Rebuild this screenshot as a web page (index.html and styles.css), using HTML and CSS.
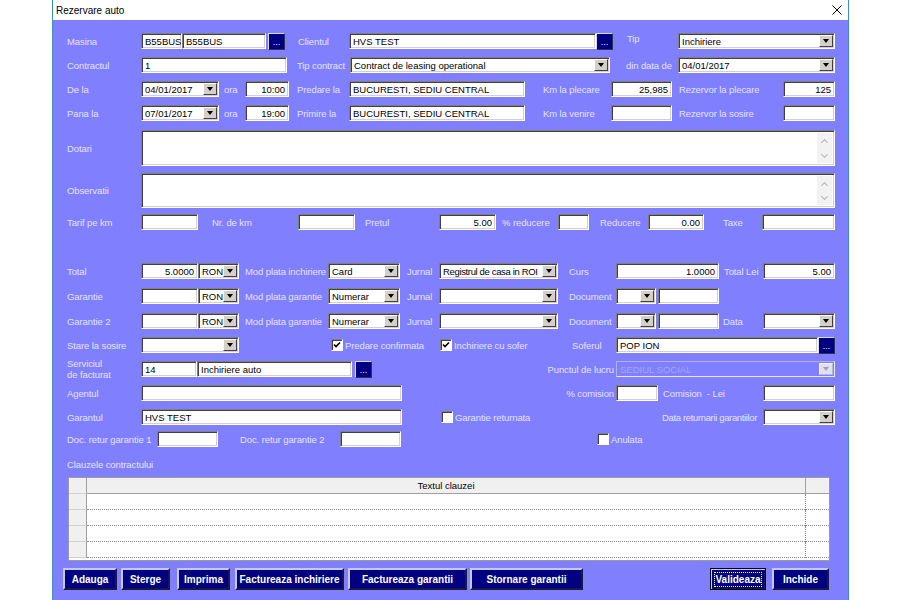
FILE: index.html
```html
<!DOCTYPE html>
<html lang="ro">
<head>
  <meta charset="UTF-8">
  <title>Rezervare auto</title>
  <link rel="stylesheet" href="styles.css">
</head>
<body>

  <div class="window">

    <!-- Title bar -->
    <div class="titlebar">
      <span>Rezervare auto</span>
      <svg class="close" width="10" height="10" viewBox="0 0 10 10">
        <path d="M0.5 0.5 L9.5 9.5 M9.5 0.5 L0.5 9.5" stroke="#000" stroke-width="1" fill="none"/>
      </svg>
    </div>

    <div class="form">

      <!-- Masina / Clientul / Tip -->
      <div class="row">
        <span class="lbl w74">Masina</span>
        <div class="box w41">B55BUS</div>
        <div class="box w84">B55BUS</div>
        <div class="dots ml2">...</div>
        <span class="lbl ml13 w51">Clientul</span>
        <div class="box w247">HVS TEST</div>
        <div class="dots">...</div>
        <span class="lbl ml14 w51 up4">Tip</span>
        <div class="box combo w157"><span>Inchiriere</span><i class="drop"></i></div>
      </div>

      <!-- Contractul -->
      <div class="row">
        <span class="lbl w74">Contractul</span>
        <div class="box w146">1</div>
        <span class="lbl ml10 w53">Tip contract</span>
        <div class="box combo w260"><span>Contract de leasing operational</span><i class="drop"></i></div>
        <span class="lbl ml16 w52">din data de</span>
        <div class="box combo w157"><span>04/01/2017</span><i class="drop"></i></div>
      </div>

      <!-- De la -->
      <div class="row">
        <span class="lbl w74">De la</span>
        <div class="box combo w78"><span>04/01/2017</span><i class="drop"></i></div>
        <span class="lbl ml5 w21">ora</span>
        <div class="box num w44">10:00</div>
        <span class="lbl ml8 w52">Predare la</span>
        <div class="box w176">BUCURESTI, SEDIU CENTRAL</div>
        <span class="lbl ml18 w68">Km la plecare</span>
        <div class="box num w61">25,985</div>
        <span class="lbl ml7 w104">Rezervor la plecare</span>
        <div class="box num w52">125</div>
      </div>

      <!-- Pana la -->
      <div class="row">
        <span class="lbl w74">Pana la</span>
        <div class="box combo w78"><span>07/01/2017</span><i class="drop"></i></div>
        <span class="lbl ml5 w21">ora</span>
        <div class="box num w44">19:00</div>
        <span class="lbl ml8 w52">Primire la</span>
        <div class="box w176">BUCURESTI, SEDIU CENTRAL</div>
        <span class="lbl ml18 w68">Km la venire</span>
        <div class="box num w61"></div>
        <span class="lbl ml7 w104">Rezervor la sosire</span>
        <div class="box num w52"></div>
      </div>

      <!-- Dotari / Observatii -->
      <div class="memo-row mt5">
        <span class="lbl w74">Dotari</span>
        <div class="box memo h36"><div class="scroll"><i class="up"></i><i class="down"></i></div></div>
      </div>
      <div class="memo-row mt7">
        <span class="lbl w74">Observatii</span>
        <div class="box memo h35"><div class="scroll"><i class="up"></i><i class="down"></i></div></div>
      </div>

      <!-- Tarif -->
      <div class="row mt2">
        <span class="lbl w74">Tarif pe km</span>
        <div class="box w57"></div>
        <span class="lbl ml14 w86">Nr. de km</span>
        <div class="box w57"></div>
        <span class="lbl ml10 w74">Pretul</span>
        <div class="box num w57">5.00</div>
        <span class="lbl ml6 w56">% reducere</span>
        <div class="box w31"></div>
        <span class="lbl ml11 w48">Reducere</span>
        <div class="box num w56">0.00</div>
        <span class="lbl ml19 w39">Taxe</span>
        <div class="box w73"></div>
      </div>

      <!-- Total -->
      <div class="row mt25">
        <span class="lbl w74">Total</span>
        <div class="box num w57">5.0000</div>
        <div class="box combo w41"><span>RON</span><i class="drop"></i></div>
        <span class="lbl ml6 w83">Mod plata inchiriere</span>
        <div class="box combo w72"><span>Card</span><i class="drop"></i></div>
        <span class="lbl ml7 w32">Jurnal</span>
        <div class="box combo tight w119"><span>Registrul de casa in ROI</span><i class="drop"></i></div>
        <span class="lbl ml11 w47">Curs</span>
        <div class="box num w103">1.0000</div>
        <span class="lbl ml5 w39">Total Lei</span>
        <div class="box num w72">5.00</div>
      </div>

      <!-- Garantie -->
      <div class="row mt1">
        <span class="lbl w74">Garantie</span>
        <div class="box w57"></div>
        <div class="box combo w41"><span>RON</span><i class="drop"></i></div>
        <span class="lbl ml6 w83">Mod plata garantie</span>
        <div class="box combo w72"><span>Numerar</span><i class="drop"></i></div>
        <span class="lbl ml7 w32">Jurnal</span>
        <div class="box combo w119"><span></span><i class="drop"></i></div>
        <span class="lbl ml11 w47">Document</span>
        <div class="box combo w40"><span></span><i class="drop"></i></div>
        <div class="box ml2 w61"></div>
      </div>

      <!-- Garantie 2 -->
      <div class="row mt1">
        <span class="lbl w74">Garantie 2</span>
        <div class="box w57"></div>
        <div class="box combo w41"><span>RON</span><i class="drop"></i></div>
        <span class="lbl ml6 w83">Mod plata garantie</span>
        <div class="box combo w72"><span>Numerar</span><i class="drop"></i></div>
        <span class="lbl ml7 w32">Jurnal</span>
        <div class="box combo w119"><span></span><i class="drop"></i></div>
        <span class="lbl ml11 w47">Document</span>
        <div class="box combo w40"><span></span><i class="drop"></i></div>
        <div class="box ml2 w61"></div>
        <span class="lbl ml4 w40">Data</span>
        <div class="box combo w72"><span></span><i class="drop"></i></div>
      </div>

      <!-- Stare la sosire -->
      <div class="row">
        <span class="lbl w74">Stare la sosire</span>
        <div class="box combo w98"><span></span><i class="drop"></i></div>
        <span class="check ml92 w109"><i class="tick"><svg width="8" height="8" viewBox="0 0 8 8"><path d="M1 3.5 L3 5.5 L7 1.5" stroke="#000" stroke-width="1.6" fill="none"/></svg></i>Predare confirmata</span>
        <span class="check w132"><i class="tick"><svg width="8" height="8" viewBox="0 0 8 8"><path d="M1 3.5 L3 5.5 L7 1.5" stroke="#000" stroke-width="1.6" fill="none"/></svg></i>Inchiriere cu sofer</span>
        <span class="lbl w44">Soferul</span>
        <div class="box w202">POP ION</div>
        <div class="dots">...</div>
      </div>

      <!-- Serviciul de facturat -->
      <div class="row">
        <span class="lbl two w74">Serviciul<br>de facturat</span>
        <div class="box w56">14</div>
        <div class="box w155">Inchiriere auto</div>
        <div class="dots ml3">...</div>
        <span class="lbl right w244">Punctul de lucru</span>
        <div class="box combo disabled w219"><span>SEDIUL SOCIAL</span><i class="drop"></i></div>
      </div>

      <!-- Agentul -->
      <div class="row">
        <span class="lbl w74">Agentul</span>
        <div class="box w261"></div>
        <span class="lbl right w214">% comision</span>
        <div class="box w42"></div>
        <span class="lbl ml5 w100">Comision &nbsp;- Lei</span>
        <div class="box w72"></div>
      </div>

      <!-- Garantul -->
      <div class="row">
        <span class="lbl w74">Garantul</span>
        <div class="box w261">HVS TEST</div>
        <span class="check ml39 w221"><i class="tick"></i>Garantie returnata</span>
        <span class="lbl tight w101">Data returnarii garantiilor</span>
        <div class="box combo w72"><span></span><i class="drop"></i></div>
      </div>

      <!-- Documente retur -->
      <div class="row h20">
        <span class="lbl w90">Doc. retur garantie 1</span>
        <div class="box w61"></div>
        <span class="lbl ml22 w100">Doc. retur garantie 2</span>
        <div class="box w61"></div>
        <span class="check ml196"><i class="tick"></i>Anulata</span>
      </div>

      <!-- Clauze -->
      <div class="lbl caption">Clauzele contractului</div>
      <div class="grid">
        <div class="grid-row head">
          <span class="rh"></span><span class="cell">Textul clauzei</span><span class="end"></span>
        </div>
        <div class="grid-row"><span class="rh"></span><span class="cell"></span><span class="end"></span></div>
        <div class="grid-row"><span class="rh"></span><span class="cell"></span><span class="end"></span></div>
        <div class="grid-row"><span class="rh"></span><span class="cell"></span><span class="end"></span></div>
        <div class="grid-row"><span class="rh"></span><span class="cell"></span><span class="end"></span></div>
      </div>

      <!-- Actiuni -->
      <div class="buttons">
        <button class="btn w54">Adauga</button>
        <button class="btn ml4 w49">Sterge</button>
        <button class="btn ml7 w53">Imprima</button>
        <button class="btn ml5 w109">Factureaza inchiriere</button>
        <button class="btn ml4 w119">Factureaza garantii</button>
        <button class="btn ml3 w113">Stornare garantii</button>
        <button class="btn focus ml127 w56"><span>Valideaza</span></button>
        <button class="btn ml6 w57">Inchide</button>
      </div>

    </div>
  </div>

</body>
</html>
```

FILE: styles.css
```css
* {
  box-sizing: border-box;
}

body {
  margin: 0;
  background: #fff;
  font-family: "Liberation Sans", Arial, sans-serif;
  font-size: 9.5px;
}

.window {
  width: 797px;
  height: 600px;
  margin-left: 52px;
  border-left: 1px solid #3d8ec4;
  border-right: 1px solid #3d8ec4;
  background: #8080ff;
  overflow: hidden;
}

.titlebar {
  height: 20px;
  background: #fff;
  display: flex;
  align-items: center;
  justify-content: space-between;
  padding: 0 6px 0 3px;
  color: #000;
  font-size: 10px;
}

.form {
  padding: 9px 0 0 14px;
}

/* rows of fields */
.row {
  display: flex;
  align-items: center;
  height: 24px;
}

.row > *, .memo-row > *, .buttons > * {
  flex-shrink: 0;
}

.lbl {
  color: #e2e2ff;
  white-space: nowrap;
  letter-spacing: -0.1px;
}

.lbl.right {
  text-align: right;
  padding-right: 2px;
}

.lbl.two {
  line-height: 11px;
}

.up4 {
  margin-bottom: 6px;
}

.tight,
.tight span {
  letter-spacing: -0.35px;
}

.box {
  height: 16px;
  background: #fff;
  border: 1px solid;
  border-color: #808080 #fff #fff #808080;
  box-shadow: inset 1px 1px 0 #404040, inset -1px -1px 0 #d4d0c8;
  padding: 0 3px;
  display: flex;
  align-items: center;
  white-space: nowrap;
  overflow: hidden;
  color: #000;
}

.box.num {
  justify-content: flex-end;
}

.combo {
  padding-right: 1px;
}

.combo span {
  flex: 1;
  overflow: hidden;
}

.drop {
  width: 14px;
  height: 12px;
  flex-shrink: 0;
  background: #d4d0c8;
  border: 1px solid;
  border-color: #fff #404040 #404040 #fff;
  display: flex;
  align-items: center;
  justify-content: center;
}

.drop::after {
  content: "";
  border-left: 3.5px solid transparent;
  border-right: 3.5px solid transparent;
  border-top: 4px solid #000;
}

.disabled {
  background: #8080ff;
  border-color: #b0b0e8 #e8e8ff #e8e8ff #b0b0e8;
  box-shadow: none;
  color: #a4a4f4;
}

.disabled .drop {
  background: #e0e0f0;
  border-color: #f4f4ff #b8b8d0 #b8b8d0 #f4f4ff;
}

.disabled .drop::after {
  border-top-color: #a0a0b8;
}

.dots {
  width: 17px;
  height: 17px;
  background: #000080;
  border: 1px solid;
  border-color: #d8d8e8 #303050 #303050 #d8d8e8;
  color: #fff;
  font-size: 9px;
  line-height: 1;
  display: flex;
  align-items: flex-end;
  justify-content: center;
  padding-bottom: 2px;
}

/* memo boxes */
.memo-row {
  display: flex;
  align-items: center;
}

.memo {
  width: 694px;
  padding: 2px 2px 2px 0;
  justify-content: flex-end;
  align-items: stretch;
}

.scroll {
  width: 15px;
  background: #f2f2f2;
  display: flex;
  flex-direction: column;
  justify-content: space-between;
  align-items: center;
  padding: 5px 0 4px;
}

.scroll i {
  width: 5px;
  height: 5px;
  border-left: 1px solid #b4b4b4;
  border-top: 1px solid #b4b4b4;
}

.scroll .up {
  transform: rotate(45deg);
  margin-top: 2px;
}

.scroll .down {
  transform: rotate(225deg);
  margin-bottom: 2px;
}

/* checkboxes */
.check {
  display: flex;
  align-items: center;
  gap: 2px;
  color: #e2e2ff;
  white-space: nowrap;
  letter-spacing: -0.1px;
}

.tick {
  width: 12px;
  height: 12px;
  background: #fff;
  border: 1px solid;
  border-color: #808080 #fff #fff #808080;
  box-shadow: inset 1px 1px 0 #404040;
  display: flex;
  align-items: center;
  justify-content: center;
}

/* clauze grid */
.caption {
  height: 14px;
  margin-top: 9px;
  line-height: 14px;
}

.grid {
  width: 762px;
  height: 84px;
  margin: 5px 0 0 1px;
  background: #fff;
  border: 1px solid #9a9a9a;
  color: #000;
}

.grid-row {
  display: flex;
  height: 16px;
}

.grid-row .rh {
  width: 18px;
  background: #f0f0f0;
  border-right: 1px solid #a0a0a0;
  border-bottom: 1px solid #d0d0d0;
}

.grid-row .cell {
  flex: 1;
  border-bottom: 1px dotted #8a8a8a;
}

.grid-row .end {
  width: 24px;
  border-left: 1px dotted #8a8a8a;
  border-bottom: 1px dotted #8a8a8a;
}

.grid-row.head .cell {
  background: #f0f0f0;
  text-align: center;
  line-height: 15px;
  border-bottom: 1px solid #a0a0a0;
}

.grid-row.head .end {
  background: #f0f0f0;
  border-left: 1px solid #a0a0a0;
  border-bottom: 1px solid #a0a0a0;
}

/* bottom buttons */
.buttons {
  display: flex;
  margin: 7px 0 0 -4px;
}

.btn {
  height: 22px;
  padding: 0;
  background: #000080;
  color: #fff;
  font-family: "Liberation Sans", Arial, sans-serif;
  font-size: 10px;
  font-weight: bold;
  border: 2px solid;
  border-color: #c8c8e0 #1a1a40 #1a1a40 #c8c8e0;
  display: flex;
  align-items: center;
  justify-content: center;
}

.btn.focus {
  border: 1px solid #000;
  box-shadow: inset 1px 1px 0 #c8c8e0, inset -1px -1px 0 #1a1a40;
}

.btn.focus span {
  border: 1px dotted #fff;
  padding: 1px 0;
}

/* spacing helpers */
.mt1 { margin-top: 1px; }
.mt2 { margin-top: 2px; }
.mt5 { margin-top: 5px; }
.mt7 { margin-top: 7px; }
.mt25 { margin-top: 25px; }
.h20 { height: 20px; }
.h35 { height: 35px; }
.h36 { height: 36px; }

.ml2 { margin-left: 2px; }
.ml3 { margin-left: 3px; }
.ml4 { margin-left: 4px; }
.ml5 { margin-left: 5px; }
.ml6 { margin-left: 6px; }
.ml7 { margin-left: 7px; }
.ml8 { margin-left: 8px; }
.ml10 { margin-left: 10px; }
.ml11 { margin-left: 11px; }
.ml13 { margin-left: 13px; }
.ml14 { margin-left: 14px; }
.ml16 { margin-left: 16px; }
.ml18 { margin-left: 18px; }
.ml19 { margin-left: 19px; }
.ml22 { margin-left: 22px; }
.ml39 { margin-left: 39px; }
.ml92 { margin-left: 92px; }
.ml127 { margin-left: 127px; }
.ml196 { margin-left: 196px; }

.w17 { width: 17px; }
.w21 { width: 21px; }
.w31 { width: 31px; }
.w32 { width: 32px; }
.w39 { width: 39px; }
.w40 { width: 40px; }
.w41 { width: 41px; }
.w42 { width: 42px; }
.w44 { width: 44px; }
.w47 { width: 47px; }
.w48 { width: 48px; }
.w49 { width: 49px; }
.w51 { width: 51px; }
.w52 { width: 52px; }
.w53 { width: 53px; }
.w54 { width: 54px; }
.w56 { width: 56px; }
.w57 { width: 57px; }
.w61 { width: 61px; }
.w68 { width: 68px; }
.w72 { width: 72px; }
.w73 { width: 73px; }
.w74 { width: 74px; }
.w78 { width: 78px; }
.w83 { width: 83px; }
.w84 { width: 84px; }
.w86 { width: 86px; }
.w90 { width: 90px; }
.w98 { width: 98px; }
.w100 { width: 100px; }
.w101 { width: 101px; }
.w103 { width: 103px; }
.w104 { width: 104px; }
.w109 { width: 109px; }
.w113 { width: 113px; }
.w119 { width: 119px; }
.w132 { width: 132px; }
.w146 { width: 146px; }
.w155 { width: 155px; }
.w157 { width: 157px; }
.w176 { width: 176px; }
.w202 { width: 202px; }
.w214 { width: 214px; }
.w219 { width: 219px; }
.w221 { width: 221px; }
.w244 { width: 244px; }
.w247 { width: 247px; }
.w260 { width: 260px; }
.w261 { width: 261px; }
```
